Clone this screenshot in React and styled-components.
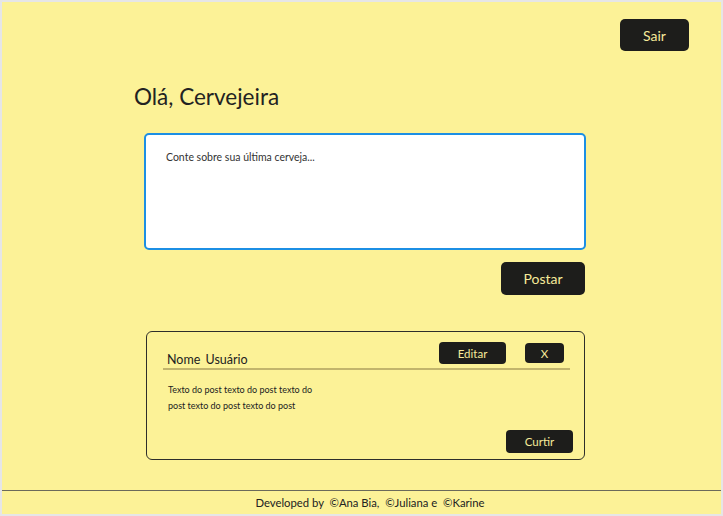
import React from 'react'
import styled, { createGlobalStyle } from 'styled-components'

const Global = createGlobalStyle`
  html, body {
    margin: 0;
    padding: 0;
    background: #e6e6e6;
  }
  body {
    padding: 2px;
    box-sizing: border-box;
    height: 516px;
    overflow: hidden;
    font-family: Lato, "Open Sans", sans-serif;
  }
  * { box-sizing: border-box; }
`

const Page = styled.div`
  background: #fcf297;
  height: 512px;
  display: flex;
  flex-direction: column;
`

const TopBar = styled.header`
  display: flex;
  justify-content: flex-end;
  padding: 17px 32px 0 0;
`

const DarkButton = styled.button`
  background: #1d1d1b;
  color: #f6ea9a;
  border: none;
  border-radius: ${({ small }) => small ? '4px' : '5px'};
  font-family: Lato, "Open Sans", sans-serif;
  font-size: ${({ small }) => small ? '11.5px' : '14px'};
  width: ${({ w }) => w}px;
  height: ${({ h }) => h}px;
  padding: 0;
  cursor: pointer;
`

const Main = styled.main`
  flex: 1;
  padding-left: 130px;
  display: flex;
  flex-direction: column;
`

const Greeting = styled.h1`
  margin: 30px 0 0 2px;
  font-size: 22.5px;
  font-weight: 400;
  color: #222;
  line-height: 32px;
`

const TextBox = styled.textarea`
  margin: 20px 0 0 12px;
  width: 442px;
  height: 117px;
  border: 2px solid #1c8fe4;
  border-radius: 5px;
  background: #fff;
  padding: 16px 20px;
  font-family: Lato, "Open Sans", sans-serif;
  font-size: 10.5px;
  color: #333;
  resize: none;
  outline: none;
  &::placeholder { color: #333; }
`

const PostRow = styled.div`
  width: 453px;
  display: flex;
  justify-content: flex-end;
  margin-top: 12px;
`

const Card = styled.article`
  margin: 36px 0 0 14px;
  width: 439px;
  height: 129px;
  border: 1px solid #2e2e2a;
  border-radius: 6px;
  padding: 10px 11px 6px 17px;
  display: flex;
  flex-direction: column;
`

const CardHeader = styled.div`
  display: flex;
  align-items: flex-start;
  border-bottom: 2px solid #c2b56c;
  margin-right: 3px;
  margin-left: -1px;
  padding: 0 6px 2px 4px;
  height: 28px;
`

const UserName = styled.span`
  font-size: 12.5px;
  color: #222;
  margin-top: 10px;
  flex: 1;
  word-spacing: 2px;
`

const HeaderActions = styled.div`
  display: flex;
  gap: 19px;
  align-items: flex-start;
`

const PostText = styled.p`
  margin: 12px 0 0 4px;
  width: 150px;
  font-size: 9px;
  line-height: 16px;
  color: #222;
`

const CardFooter = styled.div`
  margin-top: auto;
  display: flex;
  justify-content: flex-end;
`

const Footer = styled.footer`
  border-top: 1px solid #6b6a5a;
  height: 24px;
  display: flex;
  align-items: center;
  justify-content: center;
  padding-left: 17px;
  font-size: 11.3px;
  color: #222;
  white-space: pre;
`

export default function App() {
  return (
    <Page>
      <Global />
      <TopBar>
        <DarkButton w={69} h={32}>Sair</DarkButton>
      </TopBar>
      <Main>
        <Greeting>Olá, Cervejeira</Greeting>
        <TextBox placeholder="Conte sobre sua última cerveja..." />
        <PostRow>
          <DarkButton w={84} h={33}>Postar</DarkButton>
        </PostRow>
        <Card>
          <CardHeader>
            <UserName>Nome Usuário</UserName>
            <HeaderActions>
              <DarkButton small w={67} h={22}>Editar</DarkButton>
              <DarkButton small w={39} h={20} style={{ marginTop: 1 }}>X</DarkButton>
            </HeaderActions>
          </CardHeader>
          <PostText>
            Texto do post texto do post texto do post texto do post texto do post
          </PostText>
          <CardFooter>
            <DarkButton small w={67} h={23}>Curtir</DarkButton>
          </CardFooter>
        </Card>
      </Main>
      <Footer>{'Developed by  ©Ana Bia,  ©Juliana e  ©Karine'}</Footer>
    </Page>
  )
}
